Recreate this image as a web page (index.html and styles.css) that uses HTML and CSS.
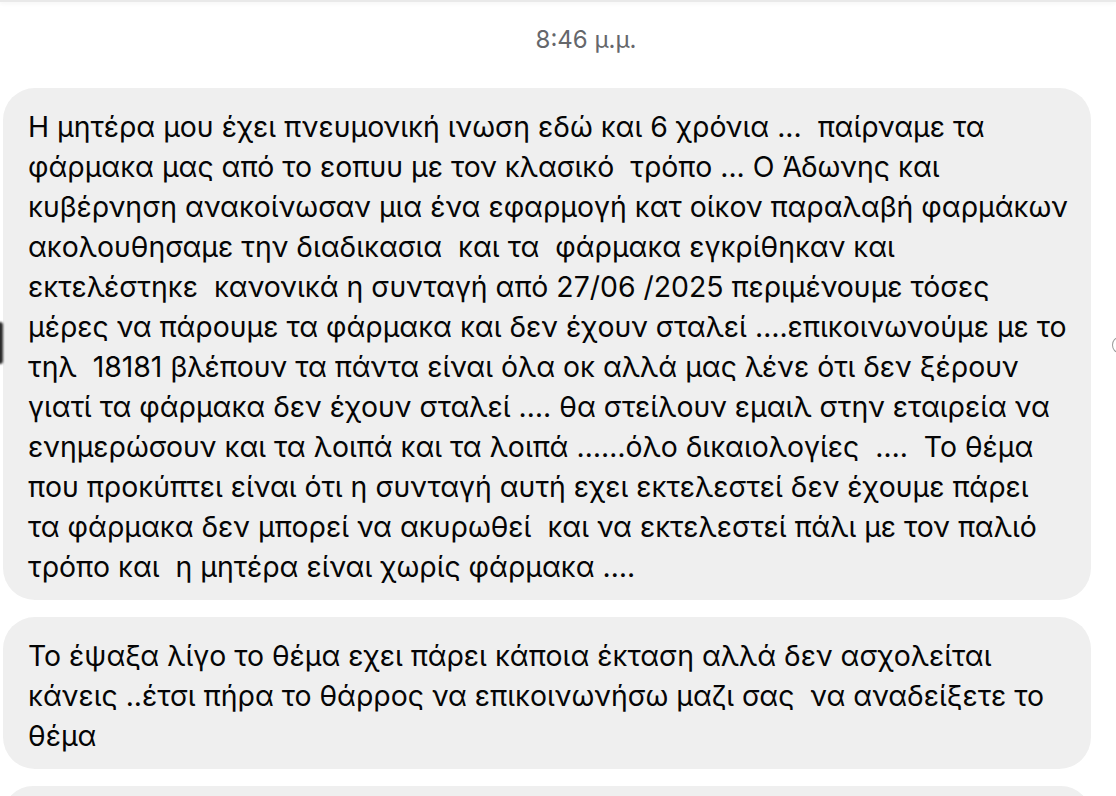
FILE: index.html
```html
<!DOCTYPE html>
<html lang="el">
<head>
<meta charset="utf-8">
<title>Μηνύματα</title>
<link rel="stylesheet" href="styles.css">
</head>
<body>
<div class="topbar"></div>
<main class="thread">
  <div class="time">8:46 μ.μ.</div>
  <div class="bubble"><p class="msg">Η μητέρα μου έχει πνευμονική ινωση εδώ και 6 χρόνια ...  παίρναμε τα
φάρμακα μας από το εοπυυ με τον κλασικό  τρόπο ... Ο Άδωνης και
κυβέρνηση ανακοίνωσαν μια ένα εφαρμογή κατ οίκον παραλαβή φαρμάκων
ακολουθησαμε την διαδικασια  και τα  φάρμακα εγκρίθηκαν και
εκτελέστηκε  κανονικά η συνταγή από 27/06 /2025 περιμένουμε τόσες
μέρες να πάρουμε τα φάρμακα και δεν έχουν σταλεί ….επικοινωνούμε με το
τηλ  18181 βλέπουν τα πάντα είναι όλα οκ αλλά μας λένε ότι δεν ξέρουν
γιατί τα φάρμακα δεν έχουν σταλεί …. θα στείλουν εμαιλ στην εταιρεία να
ενημερώσουν και τα λοιπά και τα λοιπά ……όλο δικαιολογίες  ….  Το θέμα
που προκύπτει είναι ότι η συνταγή αυτή εχει εκτελεστεί δεν έχουμε πάρει
τα φάρμακα δεν μπορεί να ακυρωθεί  και να εκτελεστεί πάλι με τον παλιό
τρόπο και  η μητέρα είναι χωρίς φάρμακα ….</p></div>
  <div class="bubble"><p class="msg">Το έψαξα λίγο το θέμα εχει πάρει κάποια έκταση αλλά δεν ασχολείται
κάνεις ..έτσι πήρα το θάρρος να επικοινωνήσω μαζι σας  να αναδείξετε το
θέμα</p></div>
  <div class="bubble bubble-cut"></div>
</main>
<div class="edge-left"></div>
<div class="edge-right"></div>
</body>
</html>
```

FILE: styles.css
```css
html, body {
  margin: 0;
  padding: 0;
  background: #ffffff;
  height: 796px;
  overflow: hidden;
}
body {
  font-family: Inter, "Liberation Sans", Arial, sans-serif;
  color: #050505;
  position: relative;
}
.topbar {
  height: 2px;
  background: #e9e9e9;
  box-shadow: 0 1px 4px rgba(0,0,0,0.08);
}
.thread {
  display: flex;
  flex-direction: column;
  gap: 17px;
  padding: 0 25px 0 3px;
}
.time {
  text-align: center;
  padding-left: 78px;
  font-size: 24px;
  color: #65676b;
  line-height: 28px;
  margin-top: 24px;
  margin-bottom: 17px;
}
.bubble {
  background: #efefef;
  border-radius: 32px;
  padding: 19px 25px 13px 25px;
}
.msg {
  margin: 0;
  white-space: pre;
  font-size: 28.4px;
  line-height: 40px;
}
.bubble-cut {
  height: 60px;
  padding: 0;
}
.edge-left {
  position: absolute;
  left: -3px;
  top: 322px;
  width: 6px;
  height: 42px;
  border-radius: 3px;
  background: #2a2a2a;
  filter: blur(1px);
}
.edge-right {
  position: absolute;
  left: 1112px;
  top: 337px;
  width: 14px;
  height: 16px;
  border-radius: 50%;
  border: 1.5px solid #9a9a9a;
  box-sizing: border-box;
}
```
